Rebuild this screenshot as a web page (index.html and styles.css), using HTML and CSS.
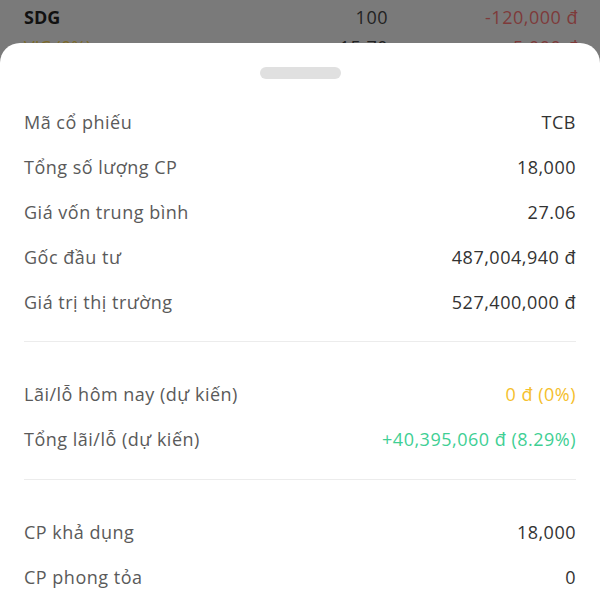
FILE: index.html
```html
<!DOCTYPE html>
<html>
  <head>
    <meta charset="utf-8">
    <title>Chi tiết cổ phiếu</title>
    <link rel="stylesheet" href="styles.css">
  </head>
  <body>
    <div class="backdrop">
      <div class="stock-row">
        <span class="code">SDG</span>
        <span class="qty">100</span>
        <span class="pnl down">-120,000 đ</span>
      </div>
      <div class="stock-row">
        <span class="code ref">VJC (0%)</span>
        <span class="qty">15.70</span>
        <span class="pnl down">-5,000 đ</span>
      </div>
    </div>

    <div class="sheet">
      <div class="handle"></div>

      <div class="group first">
        <div class="row"><span class="label">Mã cổ phiếu</span><span class="value">TCB</span></div>
        <div class="row"><span class="label">Tổng số lượng CP</span><span class="value">18,000</span></div>
        <div class="row"><span class="label">Giá vốn trung bình</span><span class="value">27.06</span></div>
        <div class="row"><span class="label">Gốc đầu tư</span><span class="value">487,004,940 đ</span></div>
        <div class="row"><span class="label">Giá trị thị trường</span><span class="value">527,400,000 đ</span></div>
      </div>

      <div class="group">
        <div class="row"><span class="label">Lãi/lỗ hôm nay (dự kiến)</span><span class="value ref">0 đ (0%)</span></div>
        <div class="row"><span class="label">Tổng lãi/lỗ (dự kiến)</span><span class="value up">+40,395,060 đ (8.29%)</span></div>
      </div>

      <div class="group last">
        <div class="row"><span class="label">CP khả dụng</span><span class="value">18,000</span></div>
        <div class="row"><span class="label">CP phong tỏa</span><span class="value">0</span></div>
      </div>
    </div>
  </body>
</html>
```

FILE: styles.css
```css
html, body {
  margin: 0;
  height: 100%;
  overflow: hidden;
}
body {
  position: relative;
  background: #7a7a7a;
  font-family: "Open Sans", "Noto Sans", sans-serif;
  font-size: 18px;
  letter-spacing: 0.5px;
}
div.backdrop {
  padding: 2px 22px 0 24px;
}
div.stock-row {
  display: grid;
  grid-template-columns: 1fr 120px 190px;
  align-items: center;
  height: 30px;
}
div.stock-row .code {
  font-weight: 700;
  color: #111;
  letter-spacing: 0;
}
div.stock-row .code.ref {
  color: #7d6a2a;
  font-weight: 400;
}
div.stock-row .qty {
  text-align: right;
  color: #222;
}
div.stock-row .pnl {
  text-align: right;
}
div.stock-row .down {
  color: #7e3a3a;
}
div.sheet {
  position: absolute;
  top: 43px;
  left: 0;
  right: 0;
  bottom: 0;
  background: #fff;
  border-radius: 20px 20px 0 0;
  padding: 0 24px;
}
div.handle {
  width: 81px;
  height: 12px;
  margin: 24px auto 0;
  background: #e0e0e0;
  border-radius: 6px;
}
div.group {
  padding: 29px 0 18px;
  border-bottom: 1px solid #ececec;
}
div.group.first {
  padding: 20px 0 17px;
}
div.group.last {
  border-bottom: none;
}
div.row {
  display: flex;
  justify-content: space-between;
  align-items: center;
  height: 45px;
}
span.label {
  color: #5a5a5a;
}
span.value {
  color: #333;
}
span.value.ref {
  color: #f5c02c;
}
span.value.up {
  color: #3fcf94;
}
```
